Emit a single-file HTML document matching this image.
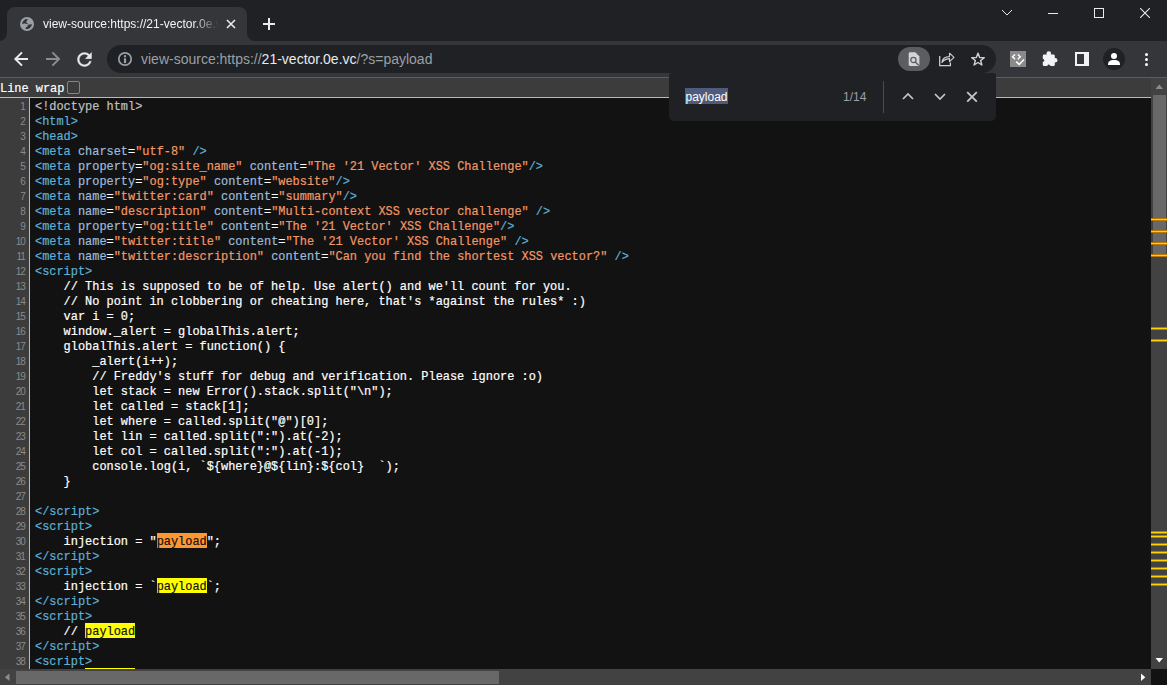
<!DOCTYPE html>
<html><head><meta charset="utf-8">
<style>
*{box-sizing:border-box}
html,body{margin:0;padding:0;width:1167px;height:685px;overflow:hidden;background:#121212;position:relative}
.abs{position:absolute}
.ui{font-family:"Liberation Sans",sans-serif}
.mono{font-family:"Liberation Mono",monospace}
#strip{left:0;top:0;width:1167px;height:41px;background:#202124}
#tab{left:7px;top:7px;width:240px;height:34px;background:#35363a;border-radius:8px 8px 0 0}
#toolbar{left:0;top:41px;width:1167px;height:36px;background:#35363a}
#sep{left:0;top:77px;width:1167px;height:1px;background:#5c5d60}
#omni{left:107px;top:45px;width:889px;height:28px;background:#202124;border-radius:14px}
#hdr{left:0;top:78px;width:1151px;height:19px;background:#3c3c3c}
#hdrline{left:0;top:97px;width:1151px;height:1px;background:#bbbbbb}
#gutter{left:0;top:98px;width:29px;height:571px;background:#3c3c3c}
#gutline{left:29px;top:98px;width:1px;height:571px;background:#bbbbbb}
#code{-webkit-text-stroke:0.2px currentColor;left:35px;top:100px;white-space:pre;height:569px;width:1116px;overflow:hidden;font-size:11.93px;line-height:15px;color:#fff}
#nums{left:0;top:99px;width:25px;text-align:right;white-space:pre;font-family:"Liberation Sans",sans-serif;font-size:10px;letter-spacing:-0.9px;line-height:15px;color:#8b8b8b}
.ln{height:15px}
.t{color:#5db0d7}.n{color:#9bbbdc}.v{color:#f29766}.d{color:#c0c0c0}
.hl{background:#ffff00}.hd{color:#121212}
.ho{background:#ff9632}
#vs{left:1151px;top:78px;width:16px;height:591px;background:#424242}
#hs{left:0;top:669px;width:1151px;height:16px;background:#424242}
#corner{left:1151px;top:669px;width:16px;height:16px;background:#121212}
.mk{left:1151px;width:16px;height:3px;background:linear-gradient(#b87a00 0,#b87a00 1px,#ffd200 1px,#ffd200 2px,#b87a00 2px)}
#find{left:669px;top:73px;width:327px;height:48px;background:#202124;border-radius:3px 3px 5px 5px}
</style></head><body>
<div id="strip" class="abs"></div>
<div id="tab" class="abs"></div>
<div id="toolbar" class="abs"></div>
<div id="omni" class="abs"></div>
<div id="sep" class="abs"></div>
<!--UI-->
<div class="abs" style="left:0;top:33px;width:7px;height:8px;background:#35363a"></div>
<div class="abs" style="left:-1px;top:25px;width:8px;height:16px;background:#202124;border-radius:0 0 8px 0"></div>
<div class="abs" style="left:247px;top:33px;width:8px;height:8px;background:#35363a"></div>
<div class="abs" style="left:247px;top:25px;width:8px;height:16px;background:#202124;border-radius:0 0 0 8px"></div>
<svg class="abs" style="left:20px;top:17px" width="14" height="14" viewBox="0 0 14 14">
<circle cx="7" cy="7" r="7" fill="#9aa0a6"/>
<path d="M2.1 6.9A4.95 4.95 0 0 1 7.9 2.1L6.72 4.09Q6.2 4.8 6.42 5.55Q6.9 6.3 8.32 6.72L7.0 7.15Q6 7 5.26 6.57Q3.8 6.4 2.1 6.9Z" fill="#35363a"/>
<path d="M11.95 7.15A4.95 4.95 0 0 1 5.55 11.75L5.84 10.51Q6.5 9.9 7.3 9.64Q7.7 9 7.59 8.32Q8.3 7.6 9.34 7.45Z" fill="#35363a"/>
</svg>
<div class="abs ui" style="left:43px;top:15px;width:176px;height:18px;overflow:hidden;white-space:nowrap;font-size:12px;line-height:18px;color:#f1f3f4;-webkit-mask-image:linear-gradient(to right,#000 150px,transparent 176px)">view-source:https://21-vector.0e.vc/?s=payload</div>
<svg class="abs" style="left:226px;top:19px" width="10" height="10" viewBox="0 0 10 10"><path d="M1 1L9 9M9 1L1 9" stroke="#e8eaed" stroke-width="1.6"/></svg>
<svg class="abs" style="left:262px;top:17px" width="14" height="14" viewBox="0 0 14 14"><path d="M7 1V13M1 7H13" stroke="#e8eaed" stroke-width="2"/></svg>
<svg class="abs" style="left:1000px;top:8px" width="14" height="10" viewBox="0 0 14 10"><path d="M2 2L7 7L12 2" stroke="#e8eaed" stroke-width="1" fill="none"/></svg>
<div class="abs" style="left:1048px;top:13px;width:10px;height:1px;background:#e8eaed"></div>
<div class="abs" style="left:1094px;top:8px;width:10px;height:10px;border:1px solid #e8eaed"></div>
<svg class="abs" style="left:1140px;top:8px" width="10" height="10" viewBox="0 0 10 10"><path d="M0 0L10 10M10 0L0 10" stroke="#e8eaed" stroke-width="1.1"/></svg>
<svg class="abs" style="left:12px;top:50px" width="20" height="18" viewBox="0 0 20 18"><path d="M16 9H3M10 2.4L3.4 9L10 15.6" stroke="#e8eaed" stroke-width="2" fill="none"/></svg>
<svg class="abs" style="left:44px;top:50px" width="20" height="18" viewBox="0 0 20 18"><path d="M2 9H15M8.4 2.4L15 9L8.4 15.6" stroke="#8b8c8f" stroke-width="2" fill="none"/></svg>
<svg class="abs" style="left:74.4px;top:48.8px" width="21" height="21" viewBox="0 0 24 24"><path d="M17.65 6.35C16.2 4.9 14.21 4 12 4c-4.42 0-7.99 3.580-7.99 8s3.57 8 7.99 8c3.73 0 6.84-2.55 7.73-6h-2.08c-.82 2.33-3.04 4-5.650 4-3.31 0-6-2.69-6-6s2.69-6 6-6c1.66 0 3.14.69 4.22 1.78L13 11h7V4l-2.35 2.35z" fill="#e8eaed" stroke="#e8eaed" stroke-width="0.45"/></svg>
<svg class="abs" style="left:117px;top:51px" width="16" height="16" viewBox="0 0 16 16"><circle cx="8" cy="8" r="6.2" stroke="#9aa0a6" stroke-width="1.7" fill="none"/><rect x="6.9" y="4.2" width="2.2" height="2.1" fill="#9aa0a6"/><rect x="6.9" y="7.3" width="2.2" height="4.8" fill="#9aa0a6"/></svg>
<div class="abs ui" style="left:141px;top:50px;height:18px;white-space:nowrap;font-size:14px;line-height:18px;color:#9aa0a6">view-source:https://<span style="color:#e8eaed">21-vector.0e.vc</span>/?s=payload</div>
<div class="abs" style="left:898px;top:47px;width:32px;height:24px;border-radius:12px;background:#5c5d60"></div>
<svg class="abs" style="left:906px;top:51px" width="16" height="17" viewBox="0 0 16 17"><path d="M2.7 2.6Q2.7 1.3 4 1.3H9.3L13.4 5.4V13.6Q13.4 15 12 15H4Q2.7 15 2.7 13.6Z" fill="#d5d5d5"/><circle cx="7.4" cy="9" r="2.6" stroke="#5c5d60" stroke-width="1.3" fill="none"/><path d="M9.2 10.9L12.6 14.3" stroke="#5c5d60" stroke-width="1.4"/></svg>
<svg class="abs" style="left:937px;top:50px" width="20" height="18" viewBox="0 0 20 18"><path d="M2.7 6.1V15.6H13.4V12.5" stroke="#d0d0d0" stroke-width="1.25" fill="none"/><path d="M5 12.5C5.5 8.5 8.5 6.6 12.5 6.6V3.2L17 7.4L12.5 11.6V8.6C9.5 8.6 7 9.8 5 12.5Z" stroke="#d0d0d0" stroke-width="1.15" fill="none" stroke-linejoin="round"/></svg>
<svg class="abs" style="left:969px;top:50px" width="18" height="18" viewBox="0 0 18 18"><path d="M9.00 3.10L10.63 7.46L15.28 7.66L11.64 10.56L12.88 15.04L9.00 12.47L5.12 15.04L6.36 10.56L2.72 7.66L7.37 7.46Z" stroke="#d0d0d0" stroke-width="1.4" fill="none" stroke-linejoin="round"/></svg>
<div class="abs" style="left:1010px;top:51px;width:16px;height:16px;background:#8a8a8a"></div>
<svg class="abs" style="left:1010px;top:51px" width="16" height="16" viewBox="0 0 16 16"><path d="M5.1 3.4L2.6 5.8L5.1 8.2M7.8 3.4L10.3 5.8L7.8 8.2" stroke="#fff" stroke-width="1.4" fill="none"/><path d="M6.2 10.6L9.2 13.4L14 8.4" stroke="#fff" stroke-width="1.5" fill="none"/></svg>
<svg class="abs" style="left:1042px;top:51px" width="17" height="17" viewBox="0 0 17 17"><rect x="0.8" y="3.6" width="12" height="11.4" rx="1.3" fill="#f1f3f4"/><circle cx="6.8" cy="2.6" r="2.3" fill="#f1f3f4"/><circle cx="13.2" cy="9.2" r="2.2" fill="#f1f3f4"/><circle cx="0.6" cy="9.3" r="1.6" fill="#35363a"/><circle cx="6.8" cy="15.2" r="1.6" fill="#35363a"/></svg>
<div class="abs" style="left:1075px;top:52px;width:14px;height:14px;background:#f1f3f4"></div>
<div class="abs" style="left:1077px;top:54px;width:7px;height:10px;background:#35363a"></div>
<div class="abs" style="left:1103px;top:48px;width:22px;height:22px;border-radius:11px;background:#202124"></div>
<div class="abs" style="left:1110.9px;top:53px;width:6.2px;height:6.2px;border-radius:50%;background:#fff"></div>
<div class="abs" style="left:1108px;top:60px;width:12.2px;height:5.4px;border-radius:5px 5px 0 0 / 4px 4px 0 0;background:#fff"></div>
<div class="abs" style="left:1144.8px;top:52.9px;width:3.4px;height:3.4px;border-radius:50%;background:#fff"></div>
<div class="abs" style="left:1144.8px;top:57.9px;width:3.4px;height:3.4px;border-radius:50%;background:#fff"></div>
<div class="abs" style="left:1144.8px;top:62.8px;width:3.4px;height:3.4px;border-radius:50%;background:#fff"></div>
<!--/UI-->

<div id="hdr" class="abs"></div>
<div id="hdrline" class="abs"></div>
<!--HDR-->
<div class="abs mono" style="left:0;top:80px;height:19px;white-space:pre;font-size:11.93px;line-height:19px;color:#fff;-webkit-text-stroke:0.2px #fff">Line wrap</div>
<div class="abs" style="left:67px;top:81px;width:13px;height:13px;border:1px solid #858585;border-radius:2px;background:#3b3b3b"></div>
<!--/HDR-->

<div id="gutter" class="abs"></div>
<div id="gutline" class="abs"></div>
<!--CODE-->
<div class="abs ho" style="left:156.55px;top:533px;width:50.05px;height:15px"></div><div class="abs hl" style="left:156.55px;top:578px;width:50.05px;height:15px"></div><div class="abs hl" style="left:85.05px;top:623px;width:50.05px;height:15px"></div><div class="abs hl" style="left:85.05px;top:668px;width:50.05px;height:15px"></div><div id="nums" class="abs mono"><div class="ln">1</div><div class="ln">2</div><div class="ln">3</div><div class="ln">4</div><div class="ln">5</div><div class="ln">6</div><div class="ln">7</div><div class="ln">8</div><div class="ln">9</div><div class="ln">10</div><div class="ln">11</div><div class="ln">12</div><div class="ln">13</div><div class="ln">14</div><div class="ln">15</div><div class="ln">16</div><div class="ln">17</div><div class="ln">18</div><div class="ln">19</div><div class="ln">20</div><div class="ln">21</div><div class="ln">22</div><div class="ln">23</div><div class="ln">24</div><div class="ln">25</div><div class="ln">26</div><div class="ln">27</div><div class="ln">28</div><div class="ln">29</div><div class="ln">30</div><div class="ln">31</div><div class="ln">32</div><div class="ln">33</div><div class="ln">34</div><div class="ln">35</div><div class="ln">36</div><div class="ln">37</div><div class="ln">38</div><div class="ln">39</div></div>
<div id="code" class="abs mono"><div class="ln"><span class="d">&lt;!doctype html&gt;</span></div><div class="ln"><span class="t">&lt;html&gt;</span></div><div class="ln"><span class="t">&lt;head&gt;</span></div><div class="ln"><span class="t">&lt;meta</span> <span class="n">charset</span>=<span class="v">"utf-8"</span><span class="t"> /&gt;</span></div><div class="ln"><span class="t">&lt;meta</span> <span class="n">property</span>=<span class="v">"og:site_name"</span> <span class="n">content</span>=<span class="v">"The '21 Vector' XSS Challenge"</span><span class="t">/&gt;</span></div><div class="ln"><span class="t">&lt;meta</span> <span class="n">property</span>=<span class="v">"og:type"</span> <span class="n">content</span>=<span class="v">"website"</span><span class="t">/&gt;</span></div><div class="ln"><span class="t">&lt;meta</span> <span class="n">name</span>=<span class="v">"twitter:card"</span> <span class="n">content</span>=<span class="v">"summary"</span><span class="t">/&gt;</span></div><div class="ln"><span class="t">&lt;meta</span> <span class="n">name</span>=<span class="v">"description"</span> <span class="n">content</span>=<span class="v">"Multi-context XSS vector challenge"</span><span class="t"> /&gt;</span></div><div class="ln"><span class="t">&lt;meta</span> <span class="n">property</span>=<span class="v">"og:title"</span> <span class="n">content</span>=<span class="v">"The '21 Vector' XSS Challenge"</span><span class="t">/&gt;</span></div><div class="ln"><span class="t">&lt;meta</span> <span class="n">name</span>=<span class="v">"twitter:title"</span> <span class="n">content</span>=<span class="v">"The '21 Vector' XSS Challenge"</span><span class="t"> /&gt;</span></div><div class="ln"><span class="t">&lt;meta</span> <span class="n">name</span>=<span class="v">"twitter:description"</span> <span class="n">content</span>=<span class="v">"Can you find the shortest XSS vector?"</span><span class="t"> /&gt;</span></div><div class="ln"><span class="t">&lt;script&gt;</span></div><div class="ln">    // This is supposed to be of help. Use alert() and we'll count for you.</div><div class="ln">    // No point in clobbering or cheating here, that's *against the rules* :)</div><div class="ln">    var i = 0;</div><div class="ln">    window._alert = globalThis.alert;</div><div class="ln">    globalThis.alert = function() {</div><div class="ln">        _alert(i++);</div><div class="ln">        // Freddy's stuff for debug and verification. Please ignore :o)</div><div class="ln">        let stack = new Error().stack.split("\n");</div><div class="ln">        let called = stack[1];</div><div class="ln">        let where = called.split("@")[0];</div><div class="ln">        let lin = called.split(":").at(-2);</div><div class="ln">        let col = called.split(":").at(-1);</div><div class="ln">        console.log(i, `${where}@${lin}:${col}  `);</div><div class="ln">    }</div><div class="ln"> </div><div class="ln"><span class="t">&lt;/script&gt;</span></div><div class="ln"><span class="t">&lt;script&gt;</span></div><div class="ln">    injection = "<span class="hd">payload</span>";</div><div class="ln"><span class="t">&lt;/script&gt;</span></div><div class="ln"><span class="t">&lt;script&gt;</span></div><div class="ln">    injection = `<span class="hd">payload</span>`;</div><div class="ln"><span class="t">&lt;/script&gt;</span></div><div class="ln"><span class="t">&lt;script&gt;</span></div><div class="ln">    // <span class="hd">payload</span></div><div class="ln"><span class="t">&lt;/script&gt;</span></div><div class="ln"><span class="t">&lt;script&gt;</span></div><div class="ln">    /* <span class="hd">payload</span> */</div></div>
<!--/CODE-->
<div id="vs" class="abs"></div>
<div id="hs" class="abs"></div>
<div id="corner" class="abs"></div>
<!--SB-->
<div class="abs" style="left:1153px;top:95px;width:13px;height:160px;background:#686868"></div>
<svg class="abs" style="left:1151px;top:78px" width="16" height="16" viewBox="0 0 16 16"><path d="M4.5 11L8.25 6.5L12 11Z" fill="#8c8c8c"/></svg>
<svg class="abs" style="left:1151px;top:653px" width="16" height="16" viewBox="0 0 16 16"><path d="M4.5 5L8.25 9.5L12 5Z" fill="#fff"/></svg>
<div class="abs" style="left:16px;top:671px;width:483px;height:13px;background:#686868"></div>
<svg class="abs" style="left:0;top:669px" width="16" height="16" viewBox="0 0 16 16"><path d="M9.5 4.5L4.8 8.2L9.5 12Z" fill="#8c8c8c"/></svg>
<svg class="abs" style="left:1135px;top:669px" width="16" height="16" viewBox="0 0 16 16"><path d="M6 4.5L10.3 8.2L6 12Z" fill="#fff"/></svg>
<div class="abs mk" style="top:218px"></div><div class="abs mk" style="top:230px"></div><div class="abs mk" style="top:242px"></div><div class="abs mk" style="top:254px"></div><div class="abs mk" style="top:327px"></div><div class="abs mk" style="top:339px"></div><div class="abs mk" style="top:531px"></div><div class="abs mk" style="top:535px"></div><div class="abs mk" style="top:543px"></div><div class="abs mk" style="top:551px"></div><div class="abs mk" style="top:559px"></div><div class="abs mk" style="top:567px"></div><div class="abs mk" style="top:575px"></div><div class="abs mk" style="top:583px"></div>
<!--/SB-->

<div id="find" class="abs"></div>
<!--FIND-->
<div class="abs" style="left:685px;top:88px;width:43px;height:16px;background:#4f5b7c"></div>
<div class="abs ui" style="left:685.5px;top:88px;height:18px;white-space:nowrap;font-size:12px;line-height:18px;color:#fff">payload</div>
<div class="abs ui" style="left:843px;top:88px;height:18px;white-space:nowrap;font-size:12px;line-height:18px;color:#9aa0a6">1/14</div>
<div class="abs" style="left:883px;top:81px;width:1px;height:32px;background:#4a4c50"></div>
<svg class="abs" style="left:900px;top:89px" width="16" height="14" viewBox="0 0 16 14"><path d="M3 10L8 5L13 10" stroke="#c4c7c5" stroke-width="1.7" fill="none"/></svg>
<svg class="abs" style="left:932px;top:89px" width="16" height="14" viewBox="0 0 16 14"><path d="M3 5L8 10L13 5" stroke="#c4c7c5" stroke-width="1.7" fill="none"/></svg>
<svg class="abs" style="left:964px;top:89px" width="16" height="16" viewBox="0 0 16 16"><path d="M3.2 3.1L12.8 12.7M12.8 3.1L3.2 12.7" stroke="#c4c7c5" stroke-width="1.8" fill="none"/></svg>
<!--/FIND-->

</body></html>
